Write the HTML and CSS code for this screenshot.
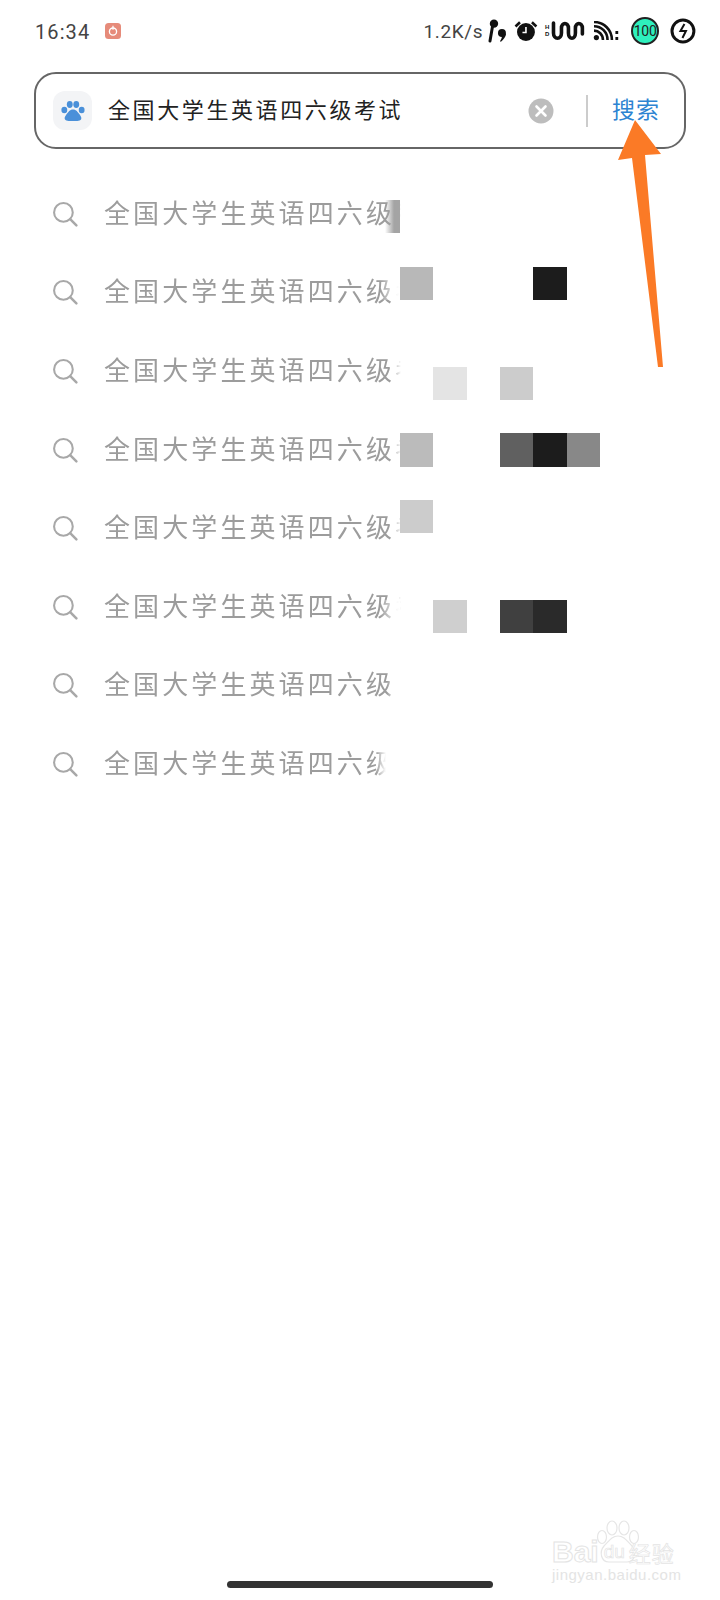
FILE: index.html
```html
<!DOCTYPE html>
<html>
<head>
    <meta charset="utf-8" />
    <title>搜索</title>
    <link rel="stylesheet" href="styles.css">
</head>
<body>
    <svg class="defs" width="0" height="0">
        <symbol id="lens" viewBox="0 0 26 26"><circle cx="11" cy="11" r="9" fill="none" stroke="#a8a8a8" stroke-width="2"/><path d="M17.500 17.500l6 6" stroke="#a8a8a8" stroke-width="2.400" stroke-linecap="round"/></symbol>
    </svg>

    <div class="status">
        <span class="time">16:34</span>
        <span class="app-dot">
            <svg viewBox="0 0 16 16" width="16" height="16"><rect width="16" height="16" rx="3.500" fill="#e68b7a"/><circle cx="8" cy="8.600" r="3.600" fill="none" stroke="#fff" stroke-width="1.300"/><path d="M8 2.800v4" stroke="#fff" stroke-width="1.200"/></svg>
        </span>
        <span class="speed">1.2K/s</span>
        <svg class="ic-bud" viewBox="0 0 20 24" width="20" height="24"><circle cx="7" cy="4.600" r="4.200" fill="#111"/><path d="M5.600 7 3 22" stroke="#111" stroke-width="3" stroke-linecap="round" fill="none"/><circle cx="15" cy="14" r="4" fill="#111"/><path d="M19 14.600c0 3.400-2.400 6-5 8.200l-1-.6c1.400-1.800 2-3.400 2-5.400z" fill="#111"/></svg>
        <svg class="ic-alarm" viewBox="0 0 24 24" width="24" height="24"><circle cx="12" cy="13" r="9" fill="#111"/><path d="M12 8v5.500H8.500" stroke="#fff" stroke-width="1.600" fill="none"/><path d="M1.500 7.500 6 3.200M22.500 7.500 18 3.200" stroke="#111" stroke-width="2.600"/></svg>
        <span class="hd"><b>H</b><b>D</b></span>
        <svg class="ic-wave" viewBox="0 0 34 20" width="34" height="20"><path d="M2.500 2v10c0 7 8 7 8 0V7c0-6 7-6 7 0v5c0 7 7 7 7 0V7c0-6 7-6 7 0v6" fill="none" stroke="#111" stroke-width="3.600" stroke-linecap="round"/></svg>
        <svg class="ic-wifi" viewBox="0 0 26 20" width="26" height="20"><circle cx="3.400" cy="16.600" r="2.600" fill="#111"/><path d="M1 9.600c4.800 0 9 4 9 9.400M1 5.200c7.600 0 13.600 6 13.600 13.800M1 1c10 0 18 8 18 18" fill="none" stroke="#111" stroke-width="2.600"/><rect x="22.500" y="10" width="2.800" height="3" fill="#111"/><rect x="22.500" y="16" width="2.800" height="3" fill="#111"/></svg>
        <span class="battery">100</span>
        <svg class="ic-bolt" viewBox="0 0 26 26" width="26" height="26"><circle cx="13" cy="13" r="11" fill="none" stroke="#111" stroke-width="3"/><path d="M14.500 6 10.500 13h5.500l-3.500 7" fill="none" stroke="#111" stroke-width="2"/></svg>
    </div>

    <div class="searchbar">
        <span class="paw-box">
            <svg viewBox="0 0 24 24" width="26" height="26"><ellipse cx="4" cy="11" rx="2.700" ry="3" fill="#4a90d9"/><ellipse cx="9" cy="6" rx="2.700" ry="3.200" fill="#4a90d9"/><ellipse cx="15" cy="6" rx="2.700" ry="3.200" fill="#4a90d9"/><ellipse cx="20" cy="11" rx="2.700" ry="3" fill="#4a90d9"/><path d="M12 10.500c3 0 4.500 2.500 6 4.500 1.700 2.300 2 3.500 1.500 4.700-.6 1.300-2 1.500-3.500 1.500H8c-1.500 0-2.900-.2-3.500-1.500-.5-1.200-.2-2.400 1.500-4.700 1.500-2 3-4.500 6-4.500z" fill="#4a90d9"/></svg>
        </span>
        <span class="query">全国大学生英语四六级考试</span>
        <svg class="clear" viewBox="0 0 26 26" width="26" height="26"><circle cx="13" cy="13" r="12.500" fill="#bdbdbd"/><path d="M8.500 8.500l9 9M17.500 8.500l-9 9" stroke="#fff" stroke-width="2.600" stroke-linecap="round"/></svg>
        <span class="divider"></span>
        <span class="go">搜索</span>
    </div>

    <ul class="results">
        <li><svg class="lens"><use href="#lens"/></svg><span class="txt">全国大学生英语四六级考试</span></li>
        <li><svg class="lens"><use href="#lens"/></svg><span class="txt">全国大学生英语四六级考试</span></li>
        <li><svg class="lens"><use href="#lens"/></svg><span class="txt">全国大学生英语四六级考试</span></li>
        <li><svg class="lens"><use href="#lens"/></svg><span class="txt">全国大学生英语四六级考试</span></li>
        <li><svg class="lens"><use href="#lens"/></svg><span class="txt">全国大学生英语四六级考试</span></li>
        <li><svg class="lens"><use href="#lens"/></svg><span class="txt">全国大学生英语四六级考试</span></li>
        <li><svg class="lens"><use href="#lens"/></svg><span class="txt short">全国大学生英语四六级考试</span></li>
        <li><svg class="lens"><use href="#lens"/></svg><span class="txt shorter">全国大学生英语四六级考试</span></li>
    </ul>

    <!-- mosaic over the picture -->
    <div class="mosaic">
        <i class="c0 r1 fade-dark"></i>
        <i class="c0 r3 fade"></i>
        <i class="c0 r13 fade"></i>
        <i class="c1 r3 g-b8"></i>
        <i class="c5 r3 g-1c"></i>
        <i class="c2 r6 g-e4"></i>
        <i class="c4 r6 g-cc"></i>
        <i class="c1 r8 g-bb"></i>
        <i class="c4 r8 g-60"></i>
        <i class="c5 r8 g-1c"></i>
        <i class="c6 r8 g-88"></i>
        <i class="c1 r10 g-cc"></i>
        <i class="c2 r13 g-cf"></i>
        <i class="c4 r13 g-40"></i>
        <i class="c5 r13 g-2a"></i>
    </div>

    <svg class="arrow" viewBox="0 0 60 260" width="60" height="260"><path d="M25 0 51 34 35 35 53 247 48 247 22 38 8 40z" fill="#fb7a26"/></svg>

    <div class="watermark">
        <svg class="wm-paw" viewBox="0 0 44 44" width="44" height="44"><g fill="#fff" stroke="#e6e6e6" stroke-width="1.200"><ellipse cx="6" cy="17" rx="4.500" ry="6.500"/><ellipse cx="16" cy="8" rx="5" ry="7"/><ellipse cx="28" cy="8" rx="5" ry="7"/><ellipse cx="38" cy="17" rx="4.500" ry="6.500"/><path d="M22 16c6 0 9 5 14 10 5 6 3 16-5 16H13c-8 0-10-10-5-16 5-5 8-10 14-10z"/></g></svg>
        <div class="wm-line"><span class="wm-logo">Bai</span><span class="wm-du">du</span><span class="wm-jy">经验</span></div>
        <div class="wm-url">jingyan.baidu.com</div>
    </div>

    <div class="home"></div>
</body>
</html>
```

FILE: styles.css
```css
* {
    box-sizing: border-box;
}
html, body {
    margin: 0;
    padding: 0;
}
body {
    position: relative;
    width: 720px;
    height: 1600px;
    overflow: hidden;
    background-color: #fff;
    font-family: "Noto Sans CJK SC", "Noto Sans", sans-serif;
}
.defs {
    position: absolute;
}

/* status bar */
.status {
    display: flex;
    align-items: center;
    height: 62px;
    padding: 0 24px 0 35px;
    color: #444;
}
.time {
    font-family: Roboto, sans-serif;
    font-size: 20px;
    letter-spacing: 1.1px;
    width: 70px;
    padding-top: 1px;
}
.app-dot {
    display: flex;
    width: 320px;
}
.speed {
    font-family: Roboto, sans-serif;
    font-size: 19px;
    letter-spacing: 0.6px;
    width: 64px;
}
.ic-bud {
    margin-right: 7px;
}
.ic-alarm {
    margin-right: 7px;
}
.hd {
    display: flex;
    flex-direction: column;
    font-family: "Liberation Sans", sans-serif;
    font-size: 6px;
    line-height: 7px;
    color: #111;
    margin-right: 2px;
}
.ic-wave {
    margin-right: 8px;
}
.ic-wifi {
    margin-right: 12px;
}
.battery {
    display: flex;
    align-items: center;
    justify-content: center;
    width: 28px;
    height: 28px;
    border: 2px solid #222;
    border-radius: 50%;
    background-color: #2ef0bd;
    font-family: Roboto, sans-serif;
    font-size: 14px;
    letter-spacing: -0.3px;
    color: #222;
    margin-right: 11px;
}

/* search box */
.searchbar {
    display: flex;
    align-items: center;
    height: 77px;
    margin: 10px 34px 0 34px;
    padding: 0 0 0 17px;
    border: 2px solid #666;
    border-radius: 22px;
}
.paw-box {
    display: flex;
    align-items: center;
    justify-content: center;
    width: 39px;
    height: 39px;
    border-radius: 12px;
    background-color: #f3f4f6;
    margin-right: 16px;
}
.query {
    font-size: 22px;
    letter-spacing: 2.6px;
    color: #222;
    width: 420px;
    white-space: nowrap;
    padding-bottom: 6px;
}
.clear {
    margin-right: 32px;
}
.divider {
    width: 2px;
    height: 32px;
    background-color: #ccc;
    margin-right: 24px;
}
.go {
    font-size: 23px;
    letter-spacing: 1px;
    color: #2d84d2;
    white-space: nowrap;
    padding-bottom: 6px;
}

/* suggestion list */
.results {
    list-style: none;
    margin: 26px 0 0 0;
    padding: 0 0 0 52px;
}
.results li {
    display: flex;
    align-items: center;
    height: 78.6px;
}
.lens {
    width: 27px;
    height: 27px;
    margin: 0 25px 0 0;
}
.txt {
    display: block;
    white-space: nowrap;
    font-size: 26px;
    letter-spacing: 3.1px;
    color: #9c9c9c;
    padding-bottom: 6px;
    -webkit-mask-image: linear-gradient(to right, #000 288px, transparent 297px);
    mask-image: linear-gradient(to right, #000 288px, transparent 297px);
}
.txt.short {
    -webkit-mask-image: linear-gradient(to right, #000 283px, transparent 292px);
    mask-image: linear-gradient(to right, #000 283px, transparent 292px);
}
.txt.shorter {
    -webkit-mask-image: linear-gradient(to right, #000 272px, transparent 282px);
    mask-image: linear-gradient(to right, #000 272px, transparent 282px);
}

/* mosaic: cells sit on a fixed grid over the screenshot */
.mosaic {
    position: absolute;
    left: 380px;
    top: 200px;
    display: grid;
    grid-template-columns: 20px repeat(6, 33.33px);
    grid-template-rows: repeat(13, 33.33px);
}
.c0 { grid-column: 1; }
.c1 { grid-column: 2; }
.c2 { grid-column: 3; }
.c4 { grid-column: 5; }
.c5 { grid-column: 6; }
.c6 { grid-column: 7; }
.r1 { grid-row: 1; }
.r3 { grid-row: 3; }
.r6 { grid-row: 6; }
.r8 { grid-row: 8; }
.r10 { grid-row: 10; }
.r13 { grid-row: 13; }
.fade {
    background: linear-gradient(to right, rgba(255, 255, 255, 0), #fff);
}
.fade-dark {
    background: linear-gradient(to right, rgba(255, 255, 255, 0) 25%, #a4a4a4 70%);
}
.g-b8 { background-color: #b8b8b8; }
.g-1c { background-color: #1c1c1c; }
.g-e4 { background-color: #e4e4e4; }
.g-cc { background-color: #ccc; }
.g-bb { background-color: #bbb; }
.g-60 { background-color: #606060; }
.g-88 { background-color: #888; }
.g-cf { background-color: #cfcfcf; }
.g-40 { background-color: #404040; }
.g-2a { background-color: #2a2a2a; }

/* annotation arrow drawn over the page */
.arrow {
    position: absolute;
    left: 610px;
    top: 120px;
}

/* watermark */
.watermark {
    position: absolute;
    left: 552px;
    top: 1520px;
    width: 130px;
}
.wm-paw {
    display: block;
    margin-left: 44px;
}
.wm-line {
    display: flex;
    align-items: center;
    height: 26px;
    margin-top: -25px;
    font-family: "Liberation Sans", sans-serif;
    white-space: nowrap;
}
.wm-logo {
    font-size: 30px;
    font-weight: bold;
    color: #fff;
    -webkit-text-stroke: 1px #e4e4e4;
}
.wm-du {
    font-size: 19px;
    color: #fff;
    -webkit-text-stroke: 0.7px #e4e4e4;
    margin: 0 4px 0 5px;
}
.wm-jy {
    font-family: "Noto Sans CJK SC", sans-serif;
    font-size: 22px;
    letter-spacing: 1px;
    color: #fff;
    -webkit-text-stroke: 0.7px #e4e4e4;
}
.wm-url {
    font-family: "Liberation Sans", sans-serif;
    font-size: 15px;
    line-height: 20px;
    letter-spacing: 0.5px;
    color: #e4e4e4;
    white-space: nowrap;
}

/* gesture bar */
.home {
    position: absolute;
    left: 227px;
    top: 1581px;
    width: 266px;
    height: 7px;
    border-radius: 4px;
    background-color: #333;
}
```
